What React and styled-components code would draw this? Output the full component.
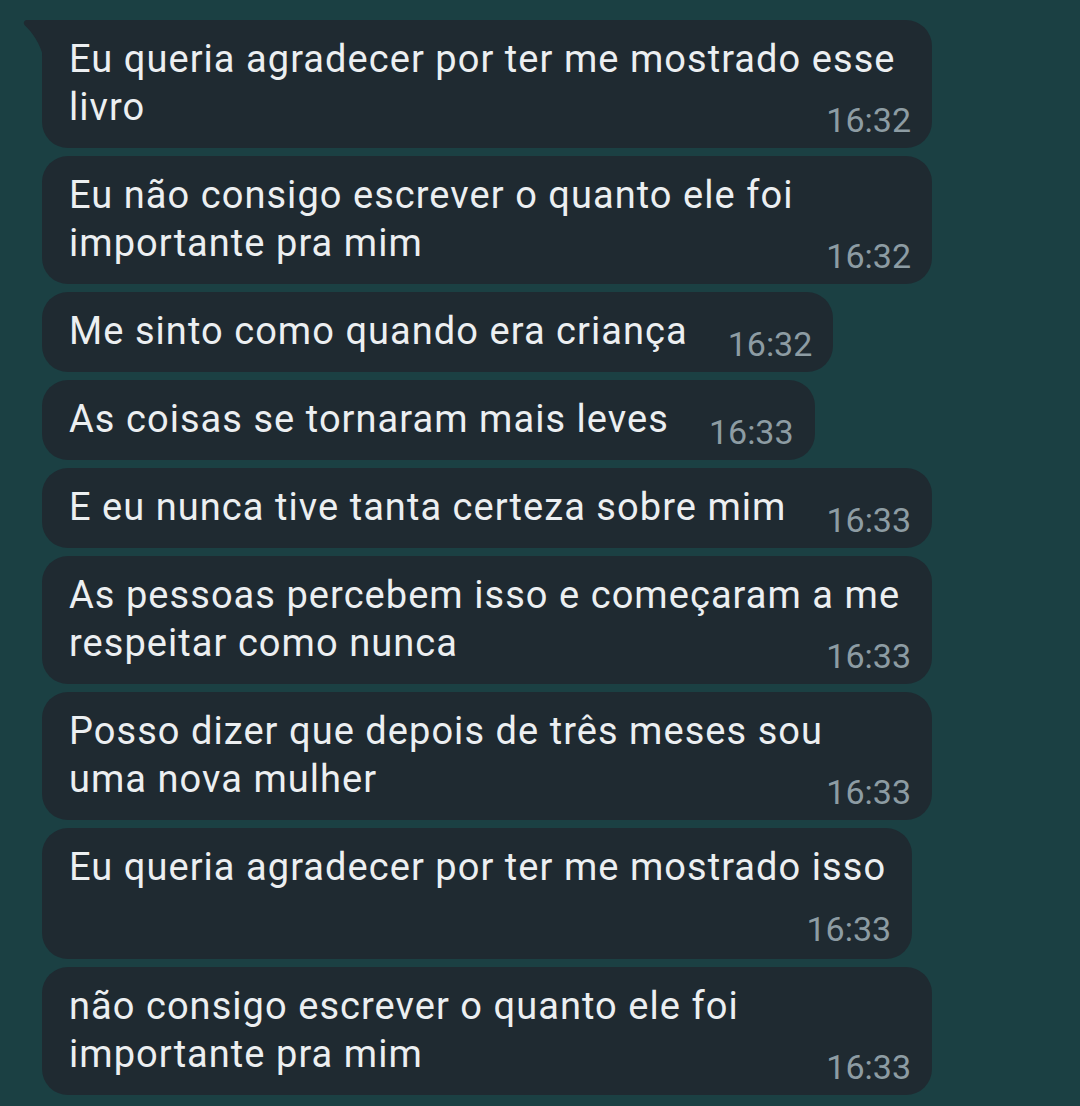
import React from "react";
import styled, { createGlobalStyle } from "styled-components";

const Global = createGlobalStyle`
  html, body { margin: 0; padding: 0; background: #1b4043; }
  body { font-family: Roboto, "Noto Sans", "Liberation Sans", sans-serif; }
`;

const Chat = styled.div`
  width: 1080px;
  height: 1106px;
  box-sizing: border-box;
  background: #1b4043;
  padding: 20px 0 0 42px;
  display: flex;
  flex-direction: column;
  align-items: flex-start;
  gap: 8px;
  overflow: hidden;
`;

const Bubble = styled.div`
  position: relative;
  box-sizing: border-box;
  width: ${(p) => (p.$full ? "890px" : "auto")};
  background: #1f2a31;
  border-radius: ${(p) => (p.$tail ? "0 26px 26px 26px" : "26px")};
  padding: 15px ${(p) => (p.$below ? "26px" : "21px")} 17px 27px;
  color: #eceff1;
  font-size: 38px;
  line-height: 48px;
  letter-spacing: 1.05px;
`;

const Tail = styled.svg`
  position: absolute;
  left: -19px;
  top: 0;
  width: 20px;
  height: 36px;
`;

const Line = styled.div`
  white-space: nowrap;
`;

const LastRow = styled.div`
  display: flex;
  align-items: flex-end;
  justify-content: space-between;
  gap: 40px;
  white-space: nowrap;
`;

const Time = styled.span`
  font-size: 34px;
  line-height: 34px;
  letter-spacing: 0;
  color: #8d9ca3;
  margin-bottom: -6px;
  white-space: nowrap;
`;

const TimeRow = styled.div`
  display: flex;
  justify-content: flex-end;
  margin: 21px -5px 2px 0;
`;

const messages = [
  { lines: ["Eu queria agradecer por ter me mostrado esse", "livro"], time: "16:32", full: true, tail: true },
  { lines: ["Eu não consigo escrever o quanto ele foi", "importante pra mim"], time: "16:32", full: true },
  { lines: ["Me sinto como quando era criança"], time: "16:32" },
  { lines: ["As coisas se tornaram mais leves"], time: "16:33" },
  { lines: ["E eu nunca tive tanta certeza sobre mim"], time: "16:33" },
  { lines: ["As pessoas percebem isso e começaram a me", "respeitar como nunca"], time: "16:33", full: true },
  { lines: ["Posso dizer que depois de três meses sou", "uma nova mulher"], time: "16:33", full: true },
  { lines: ["Eu queria agradecer por ter me mostrado isso"], time: "16:33", below: true },
  { lines: ["não consigo escrever o quanto ele foi", "importante pra mim"], time: "16:33", full: true },
];

function Message({ m }) {
  const head = m.below ? m.lines : m.lines.slice(0, -1);
  const last = m.lines[m.lines.length - 1];
  return (
    <Bubble $full={m.full} $tail={m.tail} $below={m.below}>
      {m.tail && (
        <Tail viewBox="0 0 20 36">
          <path d="M3 0 H20 V36 C17 24 10 13 1.5 5 Q-0.5 1.5 3 0 Z" fill="#1f2a31" />
        </Tail>
      )}
      {head.map((l, i) => (
        <Line key={i}>{l}</Line>
      ))}
      {m.below ? (
        <TimeRow>
          <Time>{m.time}</Time>
        </TimeRow>
      ) : (
        <LastRow>
          <span>{last}</span>
          <Time>{m.time}</Time>
        </LastRow>
      )}
    </Bubble>
  );
}

export default function App() {
  return (
    <>
      <Global />
      <Chat>
        {messages.map((m, i) => (
          <Message key={i} m={m} />
        ))}
      </Chat>
    </>
  );
}
